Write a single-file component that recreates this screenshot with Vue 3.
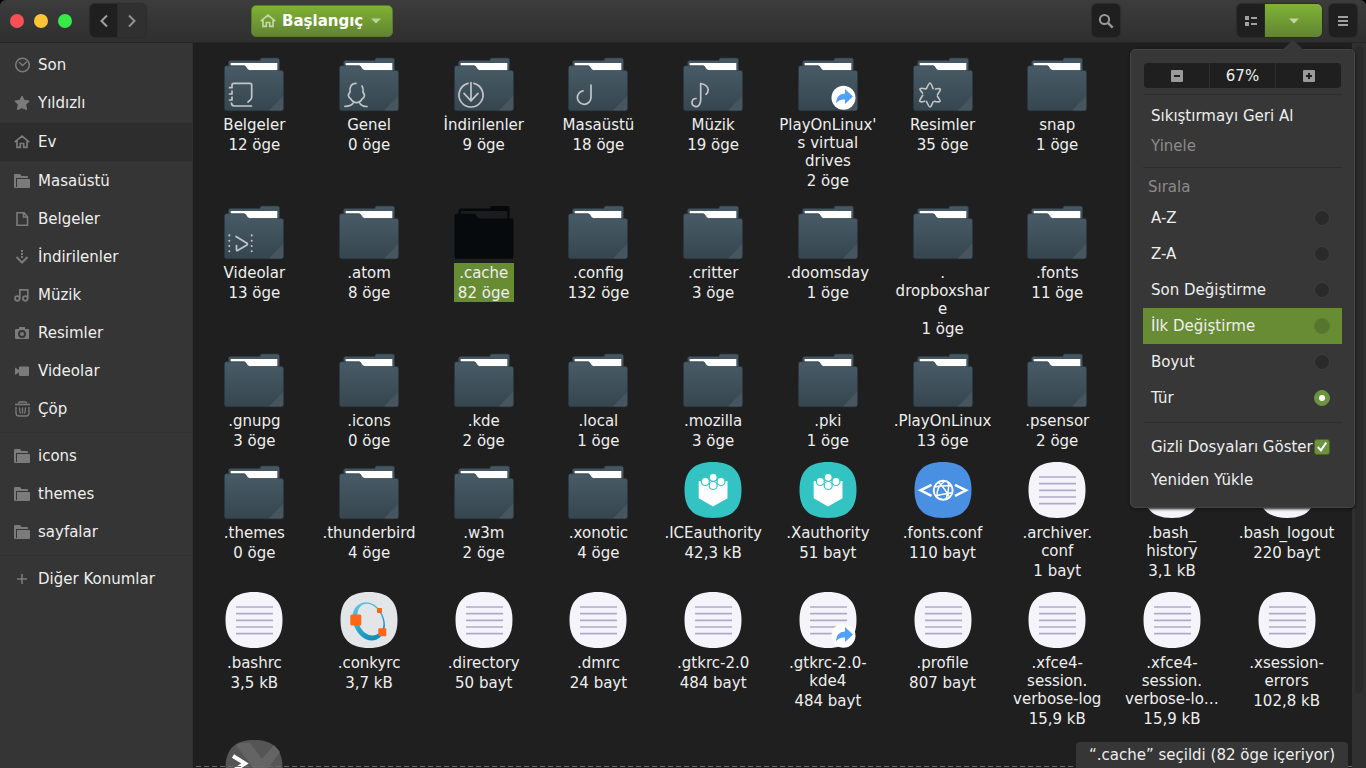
<script setup>
import { ref } from 'vue'

const places = [
  { icon: 'clock', name: 'Son' },
  { icon: 'star', name: 'Yıldızlı' },
  { icon: 'home', name: 'Ev', active: true },
  { icon: 'folder', name: 'Masaüstü' },
  { icon: 'doc', name: 'Belgeler' },
  { icon: 'down', name: 'İndirilenler' },
  { icon: 'music', name: 'Müzik' },
  { icon: 'camera', name: 'Resimler' },
  { icon: 'video', name: 'Videolar' },
  { icon: 'trash', name: 'Çöp' }
]
const bookmarks = [
  { icon: 'folder', name: 'icons' },
  { icon: 'folder', name: 'themes' },
  { icon: 'folder', name: 'sayfalar' }
]
const others = [{ icon: 'plus', name: 'Diğer Konumlar' }]
const groups = [places, bookmarks, others]

const d = (lines, size, extra = {}) => ({ kind: 'folder', lines: [].concat(lines), size, ...extra })
const f = (lines, size, extra = {}) => ({ kind: 'text', lines: [].concat(lines), size, ...extra })

const files = [
  d('Belgeler', '12 öge', { emblem: 'docs' }),
  d('Genel', '0 öge', { emblem: 'person' }),
  d('İndirilenler', '9 öge', { emblem: 'download' }),
  d('Masaüstü', '18 öge', { emblem: 'desktop' }),
  d('Müzik', '19 öge', { emblem: 'music' }),
  d(["PlayOnLinux'", 's virtual', 'drives'], '2 öge', { link: true }),
  d('Resimler', '35 öge', { emblem: 'pictures' }),
  d('snap', '1 öge'),
  d('Videolar', '13 öge', { emblem: 'videos', start: true }),
  d('.atom', '8 öge'),
  d('.cache', '82 öge', { selected: true }),
  d('.config', '132 öge'),
  d('.critter', '3 öge'),
  d('.doomsday', '1 öge'),
  d(['.', 'dropboxshar', 'e'], '1 öge'),
  d('.fonts', '11 öge'),
  d('.gnupg', '3 öge', { start: true }),
  d('.icons', '0 öge'),
  d('.kde', '2 öge'),
  d('.local', '1 öge'),
  d('.mozilla', '3 öge'),
  d('.pki', '1 öge'),
  d('.PlayOnLinux', '13 öge'),
  d('.psensor', '2 öge'),
  d('.themes', '0 öge', { start: true }),
  d('.thunderbird', '4 öge'),
  d('.w3m', '2 öge'),
  d('.xonotic', '4 öge'),
  f('.ICEauthority', '42,3 kB', { kind: 'brick' }),
  f('.Xauthority', '51 bayt', { kind: 'brick' }),
  f('.fonts.conf', '110 bayt', { kind: 'xml' }),
  f(['.archiver.', 'conf'], '1 bayt'),
  f(['.bash_', 'history'], '3,1 kB'),
  f('.bash_logout', '220 bayt'),
  f('.bashrc', '3,5 kB'),
  f('.conkyrc', '3,7 kB', { kind: 'octave' }),
  f('.directory', '50 bayt'),
  f('.dmrc', '24 bayt'),
  f('.gtkrc-2.0', '484 bayt'),
  f(['.gtkrc-2.0-', 'kde4'], '484 bayt', { link: true }),
  f('.profile', '807 bayt'),
  f(['.xfce4-', 'session.', 'verbose-log'], '15,9 kB'),
  f(['.xfce4-', 'session.', 'verbose-lo…'], '15,9 kB'),
  f(['.xsession-', 'errors'], '102,8 kB'),
  f([], '', { kind: 'shell' })
]

const sorts = ['A-Z', 'Z-A', 'Son Değiştirme', 'İlk Değiştirme', 'Boyut', 'Tür']
const sort = ref('Tür')
const showHidden = ref(true)
const hovered = 'İlk Değiştirme'
const squircle = 'M30 2C49 2 58.500 11 58.500 30C58.500 49 49 58 30 58C11 58 1.500 49 1.500 30C1.500 11 11 2 30 2Z'
</script>

<template>
  <div class="window">
    <svg class="defs" aria-hidden="true">
      <defs>
        <linearGradient id="front" x1="0" y1="0" x2="0" y2="1">
          <stop offset="0" stop-color="#485b66" />
          <stop offset="1" stop-color="#36464f" />
        </linearGradient>
        <linearGradient id="ring" x1="0" y1="0" x2="0" y2="1">
          <stop offset="0" stop-color="#5cc3e0" />
          <stop offset="1" stop-color="#0c8cbb" />
        </linearGradient>
      </defs>
    </svg>

    <header class="bar">
      <div class="lights">
        <button class="light red" aria-label="Kapat"></button>
        <button class="light yellow" aria-label="Küçült"></button>
        <button class="light green" aria-label="Büyüt"></button>
      </div>
      <div class="nav">
        <button class="tool first" aria-label="Geri">
          <svg width="16" height="16" viewBox="0 0 16 16"><path d="M11 2.500L5.500 8L11 13.500" fill="none" stroke="#a0a0a0" stroke-width="2" /></svg>
        </button>
        <button class="tool last" aria-label="İleri" disabled>
          <svg width="16" height="16" viewBox="0 0 16 16"><path d="M5 2.500L10.500 8L5 13.500" fill="none" stroke="#919191" stroke-width="2" /></svg>
        </button>
      </div>
      <button class="path">
        <svg width="16" height="16" viewBox="0 0 16 16"><path d="M.7 8.200L8 2.200l7.300 6M3 7v6.300h3.300V9.500h3.400v3.800H13V7" fill="none" stroke="#c5d7a6" stroke-width="1.700" /></svg>
        <span>Başlangıç</span>
        <svg width="10" height="6" viewBox="0 0 10 6"><path d="M0 .5h10L5 5.500z" fill="#bdd19c" /></svg>
      </button>
      <div class="right">
        <button class="tool search" aria-label="Ara">
          <svg width="16" height="16" viewBox="0 0 16 16"><circle cx="6.500" cy="6.500" r="4.600" fill="none" stroke="#999" stroke-width="2" /><path d="M10 10l4.700 4.700" stroke="#999" stroke-width="2.400" /></svg>
        </button>
        <button class="tool first" aria-label="Liste görünümü">
          <svg width="14" height="12" viewBox="0 0 14 12"><path d="M1 1h4v4H1zM1 7h4v4H1zM7 2h6v2H7zM7 8h6v2H7z" fill="#a0a0a0" /></svg>
        </button>
        <button class="tool options" aria-label="Görünüm seçenekleri">
          <svg width="10" height="6" viewBox="0 0 10 6"><path d="M0 .5h10L5 5.500z" fill="#c3d6a3" /></svg>
        </button>
        <button class="tool menu" aria-label="Menü">
          <svg width="10" height="10" viewBox="0 0 10 10"><path d="M0 1h10M0 5h10M0 9h10" stroke="#a0a0a0" stroke-width="1.900" /></svg>
        </button>
      </div>
    </header>

    <div class="body">
      <nav class="side">
        <ul v-for="(g, gi) in groups" :key="gi">
          <li v-for="p in g" :key="p.name" :class="{ active: p.active }">
            <a href="#">
              <svg width="16" height="16" viewBox="0 0 16 16" fill="none" stroke="#7b7b7b">
                <g v-if="p.icon === 'clock'"><circle cx="8.500" cy="8" r="6.800" stroke-width="1.500" /><path d="M5 5l3.500 3.500L13 4.500" stroke-width="1.300" /></g>
                <path v-else-if="p.icon === 'star'" d="M8 1l2.200 4.300 5 .8-3.500 3.600.9 4.900L8 12.700l-4.600 1.900.9-4.900L.8 6.100l5-.8z" fill="#7b7b7b" stroke-linejoin="round" />
                <path v-else-if="p.icon === 'home'" d="M.7 8.200L8 2.200l7.300 6M3 7v6.300h3.300V9.500h3.400v3.800H13V7" stroke-width="1.700" />
                <g v-else-if="p.icon === 'folder'" fill="#7b7b7b" stroke="none"><path d="M1 1h5l1.500 2H13q1 0 1 1v1H2v10H1q-1 0-1-1V2q0-1 1-1z" /><path d="M3 6h12q1 0 1 1v7q0 1-1 1H2v-1h1z" /></g>
                <path v-else-if="p.icon === 'doc'" d="M3 1.800h7l3.500 4v8.500H3zM9.500 2v4h4" stroke-width="1.600" />
                <g v-else-if="p.icon === 'down'"><path d="M8 1v2M8 4v2M8 7v2" stroke-width="2" /><path d="M2.500 8l5.500 5.500L13.500 8" stroke-width="2" /></g>
                <g v-else-if="p.icon === 'music'" stroke-width="1.700"><circle cx="3.300" cy="11.500" r="2.300" /><circle cx="11.300" cy="11.500" r="2.300" /><path d="M5.800 11.500V2.800h8v8.700" /></g>
                <path v-else-if="p.icon === 'camera'" d="M2 4h3V2h6v2h3q1 0 1 1v8q0 1-1 1H2q-1 0-1-1V5q0-1 1-1zM8 5a4 4 0 100 8 4 4 0 000-8zM8 7a2 2 0 110 4 2 2 0 010-4z" fill="#7b7b7b" fill-rule="evenodd" stroke="none" />
                <path v-else-if="p.icon === 'video'" d="M6 3.500h8q1 0 1 1v7.500q0 1-1 1H6q-1 0-1-1V9.500L1 12V4.500L5 7V4.500q0-1 1-1z" fill="#7b7b7b" stroke="none" />
                <g v-else-if="p.icon === 'trash'"><path d="M1 3.500h15M4.500 2.500q0-1.500 1.500-1.500h5q1.500 0 1.500 1.500" stroke-width="1.500" /><path d="M2 6v6.500q.5 2.500 2.500 2.500h8q2 0 2.500-2.500V6M5.500 6.500q0 4 1 6M11.500 6.500q0 4-1 6M8.500 6.500v6" stroke-width="1.300" /></g>
                <path v-else d="M8 3v10M3 8h10" stroke-width="1.600" />
              </svg>
              <span>{{ p.name }}</span>
            </a>
          </li>
        </ul>
      </nav>

      <main class="view">
        <ul class="grid">
          <li v-for="(it, i) in files" :key="i" :class="{ selected: it.selected, start: it.start }">
            <svg class="icon" width="60" height="60" viewBox="0 0 60 60">
              <g v-if="it.kind === 'folder' && it.selected">
                <path d="M4.500 22V10.500q0-2 2-2H36V8q0-2 2-2h15.500q2 0 2 2v14z" fill="#070809" />
                <path d="M6.700 11h46.600v8H6.700z" fill="#1b1c1e" />
                <path d="M2.500 13.700H20q1.500 0 2.500 2.300t3 2.500h32q2 0 2 2v36q0 2.200-2.200 2.200H2.700Q.5 58.700.5 56.500V15.700q0-2 2-2z" fill="#070a0c" />
              </g>
              <g v-else-if="it.kind === 'folder'">
                <path d="M4.500 22V10.500q0-2 2-2H36V8q0-2 2-2h15.500q2 0 2 2v14z" fill="#435661" stroke="#2b3a43" stroke-width=".6" />
                <path d="M6.700 11h46.600v8H6.700z" fill="#fff" />
                <path d="M2.500 13.700H20q1.500 0 2.500 2.300t3 2.500h32q2 0 2 2v36q0 2.200-2.200 2.200H2.700Q.5 58.700.5 56.500V15.700q0-2 2-2z" fill="url(#front)" stroke="#2b3a43" stroke-width=".7" />
                <path d="M59.200 43.500v13q0 2-2 2H45z" fill="#46555e" />
              </g>
              <path v-if="it.kind === 'text'" :d="squircle" fill="#f5f4fa" />
              <path v-if="it.kind === 'text'" d="M12 17h37M12 23.700h37M12 30.300h37M12 37h37M12 43.700h37" stroke="#b1a9ca" stroke-width="1.700" />
              <g v-if="it.kind === 'brick'">
                <path :d="squircle" fill="#33c3c2" />
                <path d="M15.700 21h28.800v17.300L30 46.500 15.700 38.300z" fill="#fff" />
                <g fill="#fff" stroke="#33c3c2" stroke-width="1.200"><circle cx="30.200" cy="17.300" r="4" /><circle cx="22.300" cy="21.500" r="4" /><circle cx="38" cy="21.500" r="4" /><circle cx="30.200" cy="25.500" r="4" /></g>
              </g>
              <g v-if="it.kind === 'xml'" fill="none" stroke="#fff" stroke-width="2">
                <path :d="squircle" fill="#4a90e2" stroke="none" />
                <path d="M18.500 24.800L7.500 30.300l11 5.500M42 24.800l11 5.500-11 5.500" stroke-width="2.500" />
                <circle cx="30.200" cy="30.300" r="9.500" />
                <path d="M21 27q10-2 18-1M25 22q6 5 12 16M32 21q-9 6-8 16M23 36q6-2 16-3M35 22q2 5-2 17" stroke-width="1.500" />
              </g>
              <g v-if="it.kind === 'octave'">
                <path :d="squircle" fill="#e3e6e8" />
                <g transform="rotate(-24 30 31)">
                  <path fill-rule="evenodd" d="M29.500 11.500C20 11.500 14.500 20.500 14.500 31S20 51 29.500 51 45 41.500 45 31 39 11.500 29.500 11.500zM31.500 13.500C38.500 14 43.500 21.500 43.500 31S39 46.500 31.500 46.500 19.500 39.500 19.500 31 24.500 13 31.500 13.500z" fill="url(#ring)" />
                </g>
                <g fill="#ff6616"><rect x="11.300" y="24.500" width="11" height="11" rx="1.500" /><rect x="38" y="18" width="5" height="5" rx="1" /><rect x="39.300" y="38.300" width="8" height="8" rx="1" /></g>
              </g>
              <g v-if="it.kind === 'shell'">
                <path :d="squircle" fill="#555" />
                <path d="M12 7q2-2 5-2h9l12 16L50 7l6 7-12 16 8 12H38z" fill="#646464" />
                <path d="M9 18l12 7.500-12 7.500" fill="none" stroke="#fff" stroke-width="4" />
              </g>
              <g v-if="it.emblem" fill="none" stroke="#c2c5c7" stroke-width="1.700" stroke-linecap="round" stroke-linejoin="round">
                <path v-if="it.emblem === 'docs'" d="M5.500 35.700H8V33q0-1.700 1.700-1.700H26q1.700 0 1.700 1.700v12.700q-.2 2-3.700 4.300M5.500 42H8v-3M5.500 48H8v-3M7.500 51q0 3 3 3h17" />
                <path v-else-if="it.emblem === 'person'" d="M17 31.300c-5 0-6.500 4-6 8.700l-1.700 3q.5 3 2.200 3.500Q14 50.700 17.500 50.700t6-4.200q2-1 2-3.500L24 40q.5-4-1-6M6 54.300q6 0 8-3M21 51.500q2 3 7 3" />
                <path v-else-if="it.emblem === 'download'" d="M20 31.400A12 12 0 1114 31.400M17 30.500V49M10 41.300l7 7.500 7-7.500" />
                <path v-else-if="it.emblem === 'desktop'" d="M23 33v12.500a6.800 6.800 0 11-8-6.700" />
                <path v-else-if="it.emblem === 'music'" d="M13 46.500a4 4 0 103.700 5.500q1-2 1-4.500V31.500q7 1.500 7.500 6 0 3-2.200 4.800" />
                <path v-else-if="it.emblem === 'pictures'" d="M13.500 36.500Q16 31 17 31q1 0 3 5.500M22.500 37q4-1 4.800.2 0 1-2.800 5.600M24.500 44.500q3 4 2.500 4.800-1 1-5.500 0M20 50q-2 5-3 5t-3.500-5.500M11.500 49.300q-4 1-4.800 0-.2-1 3-6M9.500 41Q6.500 37.500 7 36.800q1-1 5.500 0" />
                <g v-else><path d="M12.500 45.500v4.500q0 1 1 .4L23 45q1-1 0-1.800L12 36.500" /><path d="M5.300 35.300v.1M5.300 40.700v.1M5.300 46v.1M5.300 51.200v.1M27.700 35.300v.1M27.700 40.700v.1M27.700 46v.1M27.700 51.200v.1" stroke-width="2" /></g>
              </g>
              <g v-if="it.link">
                <circle cx="45.500" cy="45.700" r="12" fill="#fff" />
                <path d="M38 51.500q0-9.500 9-10V37l8 7.500-8 7.500v-4.500q-6-.5-9 4z" fill="#4f9ffb" />
              </g>
            </svg>
            <div v-if="it.size" class="label">
              <span v-for="(l, k) in it.lines" :key="k">{{ l }}</span>
              <span class="size">{{ it.size }}</span>
            </div>
          </li>
        </ul>
        <div class="scroll"><div class="thumb"></div></div>
        <div class="edge"></div>
        <div class="status">“.cache” seçildi (82 öge içeriyor)</div>

        <section class="popover">
          <svg class="arrow" width="22" height="10" viewBox="0 0 22 10"><path d="M0 10L11 0l11 10z" fill="#373737" /></svg>
          <div class="zoom">
            <button aria-label="Uzaklaştır"><svg width="12" height="12" viewBox="0 0 12 12"><rect width="12" height="12" rx="1" fill="#9a9a9a" /><path d="M3 6h6" stroke="#1f1f1f" stroke-width="2" /></svg></button>
            <button>67%</button>
            <button aria-label="Yakınlaştır"><svg width="12" height="12" viewBox="0 0 12 12"><rect width="12" height="12" rx="1" fill="#9a9a9a" /><path d="M3 6h6M6 3v6" stroke="#1f1f1f" stroke-width="2" /></svg></button>
          </div>
          <hr />
          <button class="item">Sıkıştırmayı Geri Al</button>
          <button class="item" disabled>Yinele</button>
          <hr />
          <div class="title">Sırala</div>
          <label v-for="s in sorts" :key="s" class="row" :class="{ hover: s === hovered }">
            <span>{{ s }}</span>
            <input v-model="sort" type="radio" name="sort" :value="s" />
          </label>
          <hr />
          <label class="row">
            <span>Gizli Dosyaları Göster</span>
            <input v-model="showHidden" type="checkbox" />
          </label>
          <button class="item">Yeniden Yükle</button>
        </section>
      </main>
    </div>
  </div>
</template>

<style>
body { background: #000; }
</style>

<style scoped>
* { box-sizing: border-box; }
.window {
  height: 100vh;
  display: flex;
  flex-direction: column;
  overflow: hidden;
  border-radius: 6px 6px 0 0;
  background: #1f1f1f;
  color: #eee;
  font: 15px/18px "DejaVu Sans", sans-serif;
}
.defs { position: absolute; width: 0; height: 0; }
svg { display: block; flex: none; }
button { border: 0; padding: 0; background: none; color: inherit; font: inherit; }
ul { list-style: none; margin: 0; padding: 0; }

.bar {
  flex: none;
  display: flex;
  align-items: center;
  height: 43px;
  padding: 0 9px 1px 10px;
  background: linear-gradient(#3c3c3c, #2f2f2f);
  border-bottom: 1px solid #262626;
}
.lights { display: flex; gap: 10px; margin-right: 18px; }
.light { width: 14px; height: 14px; border-radius: 50%; }
.red { background: #fa4f56; }
.yellow { background: #fdc436; }
.green { background: #35ea49; }
.nav { display: flex; }
.tool {
  display: flex;
  align-items: center;
  justify-content: center;
  width: 28px;
  height: 33px;
  border-radius: 5px;
  background: #1f1f1f;
  box-shadow: 0 0 1px 1px #2c2c2c;
}
.tool.first { border-radius: 5px 0 0 5px; }
.tool.last { border-radius: 0 5px 5px 0; background: #303030; }
.path {
  display: flex;
  align-items: center;
  height: 32px;
  margin: 1px 0 0 105px;
  padding: 0 11px 0 8px;
  border: 1px solid #587a2b;
  border-radius: 5px;
  background: linear-gradient(#7fb233, #618433);
  color: #fff;
  font-weight: bold;
}
.path span { margin: 0 8px 0 6px; }
.right { display: flex; margin-left: auto; }
.search { margin-right: 117px; }
.tool.options { width: 57px; border-radius: 0 5px 5px 0; background: linear-gradient(#80b334, #618433); }
.menu { margin-left: 7px; }

.body { flex: 1; display: flex; min-height: 0; }
.side { flex: none; width: 193px; padding-top: 3px; background: #353535; border-right: 1px solid #303030; overflow: hidden; }
.side ul + ul { margin-top: 4px; padding-top: 4px; border-top: 1px solid #303030; }
.side a {
  display: flex;
  align-items: center;
  gap: 8px;
  height: 38px;
  padding-left: 14px;
  color: inherit;
  text-decoration: none;
}
.side .active { background: #2d2d2d; border-top: 1px solid #313131; border-bottom: 1px solid #313131; }

.view { position: relative; flex: 1; min-width: 0; display: flex; }
.grid {
  flex: 1;
  display: grid;
  grid-template-columns: repeat(10, minmax(0, 1fr));
  row-gap: 10px;
  align-content: start;
  padding: 9px 8px 0 4px;
}
.grid li { display: flex; flex-direction: column; align-items: center; }
.grid .start { grid-column-start: 1; }
.label { display: flex; flex-direction: column; align-items: center; margin-top: 3px; padding: 1px 4px 0; white-space: nowrap; }
.size { margin-top: 2px; }
.selected .label { background: #688c33; }
.scroll { flex: none; width: 14px; padding: 3px; background: #303030; }
.thumb { width: 8px; height: 90%; border-radius: 4px; background: #2a2a2a; }
.edge {
  position: absolute;
  left: 3px;
  right: 14px;
  bottom: 1px;
  height: 1px;
  background: repeating-linear-gradient(90deg, #6a6a6a 0 5px, transparent 5px 8px);
}
.status {
  position: absolute;
  right: 18px;
  bottom: 0;
  height: 26px;
  padding: 4px 13px;
  border-radius: 4px 4px 0 0;
  background: #363636;
}

.popover {
  position: absolute;
  top: 6px;
  right: 11px;
  width: 225px;
  padding: 13px 12px 12px;
  border: 1px solid #454545;
  border-radius: 5px;
  background: #373737;
  box-shadow: 0 1px 3px #111;
}
.arrow { position: absolute; top: -10px; right: 50px; }
.zoom { display: flex; gap: 1px; margin: 0 1px 6px; border-radius: 4px; overflow: hidden; background: #2f2f2f; }
.zoom button { flex: 1; display: flex; align-items: center; justify-content: center; height: 25px; background: #1f1f1f; }
hr { height: 1px; margin: 6px 0; border: 0; background: #2e2e2e; }
.item { display: block; width: 100%; height: 30px; padding: 0 8px; text-align: left; }
.item:disabled, .title { color: #8b8b8b; }
.title { height: 26px; padding: 4px 5px; }
.row { display: flex; align-items: center; justify-content: space-between; height: 36px; padding: 0 12px 0 8px; white-space: nowrap; }
.row.hover { background: #688c33; }
input {
  appearance: none;
  flex: none;
  display: grid;
  place-items: center;
  width: 16px;
  height: 16px;
  margin: 0;
  border: 1px solid #3f3f3f;
  border-radius: 50%;
  background: #2a2a2a;
}
.hover input { border-color: #5a7a2e; background: #56762d; }
input:checked { border-color: #6c9440; background: #6c9440; }
input[type="radio"]:checked::before { content: ""; width: 6px; height: 6px; border-radius: 50%; background: #fff; }
input[type="checkbox"] { border-radius: 3px; }
input[type="checkbox"]:checked { border-color: #4b6618; }
input[type="checkbox"]:checked::before {
  content: "";
  width: 10px;
  height: 10px;
  background: #fff;
  clip-path: polygon(0 55%, 16% 42%, 38% 68%, 84% 0, 100% 12%, 40% 100%);
}
</style>
